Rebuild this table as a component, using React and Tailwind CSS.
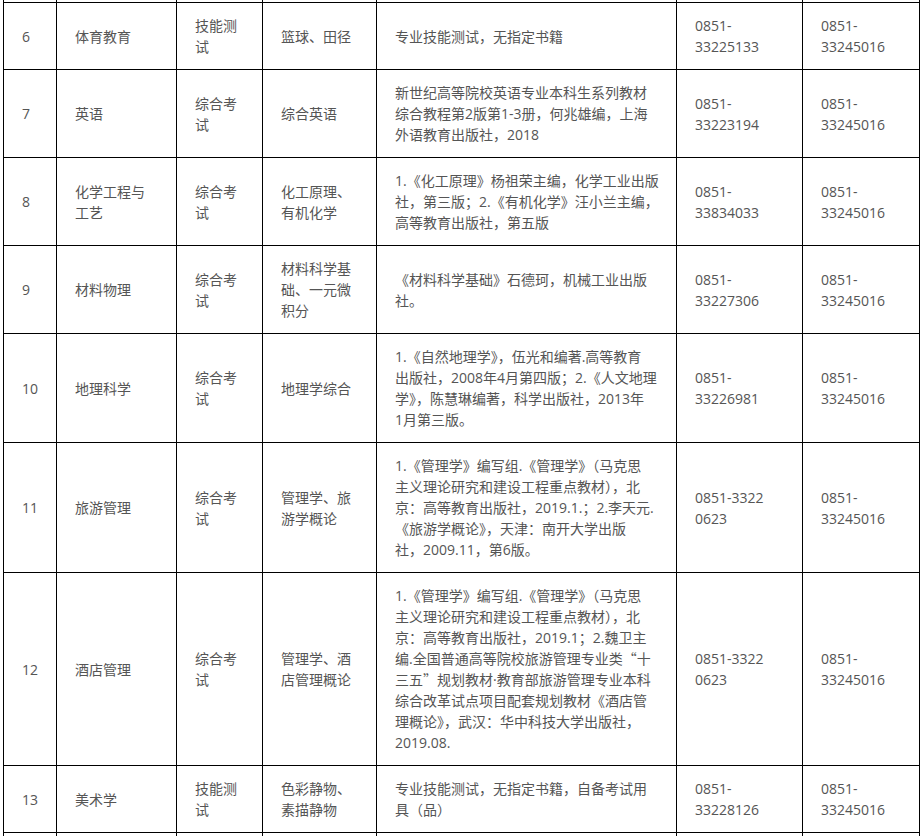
import React from 'react';

const Q = ({ children }) => (
  <span style={{ fontFamily: '"Noto Sans CJK SC", sans-serif' }}>{children}</span>
);

const rows = [
  {
    no: '6',
    major: ['体育教育'],
    kind: ['技能测', '试'],
    subject: ['篮球、田径'],
    books: ['专业技能测试，无指定书籍'],
    tel1: ['0851-', '33225133'],
  },
  {
    no: '7',
    major: ['英语'],
    kind: ['综合考', '试'],
    subject: ['综合英语'],
    books: ['新世纪高等院校英语专业本科生系列教材', '综合教程第2版第1-3册，何兆雄编，上海', '外语教育出版社，2018'],
    tel1: ['0851-', '33223194'],
  },
  {
    no: '8',
    major: ['化学工程与', '工艺'],
    kind: ['综合考', '试'],
    subject: ['化工原理、', '有机化学'],
    books: ['1.《化工原理》杨祖荣主编，化学工业出版', '社，第三版；2.《有机化学》汪小兰主编，', '高等教育出版社，第五版'],
    tel1: ['0851-', '33834033'],
  },
  {
    no: '9',
    major: ['材料物理'],
    kind: ['综合考', '试'],
    subject: ['材料科学基', '础、一元微', '积分'],
    books: ['《材料科学基础》石德珂，机械工业出版', '社。'],
    tel1: ['0851-', '33227306'],
  },
  {
    no: '10',
    major: ['地理科学'],
    kind: ['综合考', '试'],
    subject: ['地理学综合'],
    books: ['1.《自然地理学》，伍光和编著.高等教育', '出版社，2008年4月第四版；2.《人文地理', '学》，陈慧琳编著，科学出版社，2013年', '1月第三版。'],
    tel1: ['0851-', '33226981'],
  },
  {
    no: '11',
    major: ['旅游管理'],
    kind: ['综合考', '试'],
    subject: ['管理学、旅', '游学概论'],
    books: ['1.《管理学》编写组.《管理学》（马克思', '主义理论研究和建设工程重点教材），北', '京：高等教育出版社，2019.1.；2.李天元.', '《旅游学概论》，天津：南开大学出版', '社，2009.11，第6版。'],
    tel1: ['0851-3322', '0623'],
  },
  {
    no: '12',
    major: ['酒店管理'],
    kind: ['综合考', '试'],
    subject: ['管理学、酒', '店管理概论'],
    books: [
      '1.《管理学》编写组.《管理学》（马克思',
      '主义理论研究和建设工程重点教材），北',
      '京：高等教育出版社，2019.1；2.魏卫主',
      <>编.全国普通高等院校旅游管理专业类<Q>“</Q>十</>,
      <>三五<Q>”</Q>规划教材·教育部旅游管理专业本科</>,
      '综合改革试点项目配套规划教材《酒店管',
      '理概论》，武汉：华中科技大学出版社，',
      '2019.08.',
    ],
    tel1: ['0851-3322', '0623'],
  },
  {
    no: '13',
    major: ['美术学'],
    kind: ['技能测', '试'],
    subject: ['色彩静物、', '素描静物'],
    books: ['专业技能测试，无指定书籍，自备考试用', '具（品）'],
    tel1: ['0851-', '33228126'],
  },
];

const tel2 = ['0851-', '33245016'];

const Cell = ({ lines, last }) => (
  <div
    className={
      'flex flex-col justify-center border-l border-t border-black pl-[18px] pr-2 py-3 whitespace-nowrap overflow-hidden' +
      (last ? ' border-r' : '')
    }
  >
    {lines.map((l, i) => (
      <div key={i}>{l}</div>
    ))}
  </div>
);

const App = () => {
  return (
    <div
      className="bg-white w-[923px] h-[836px] overflow-hidden text-[14px] leading-[21px] text-[#555]"
      style={{ fontFamily: '"Open Sans", "Noto Sans CJK SC", sans-serif' }}
    >
      <div className="ml-[3px] grid grid-cols-[53px_120px_86px_114px_300px_126px_118px]">
        {/* tail of the row above */}
        {[0, 1, 2, 3, 4, 5, 6].map((i) => (
          <div key={i} className={'h-[2px] border-l border-black' + (i === 6 ? ' border-r' : '')} />
        ))}

        {rows.map((r) => (
          <React.Fragment key={r.no}>
            <Cell lines={[r.no]} />
            <Cell lines={r.major} />
            <Cell lines={r.kind} />
            <Cell lines={r.subject} />
            <Cell lines={r.books} />
            <Cell lines={r.tel1} />
            <Cell lines={tel2} last />
          </React.Fragment>
        ))}
        {[0, 1, 2, 3, 4, 5, 6].map((i) => (
          <div key={'b' + i} className={'h-[4px] border-l border-t border-black' + (i === 6 ? ' border-r' : '')} />
        ))}
      </div>
    </div>
  );
};

export default App;
